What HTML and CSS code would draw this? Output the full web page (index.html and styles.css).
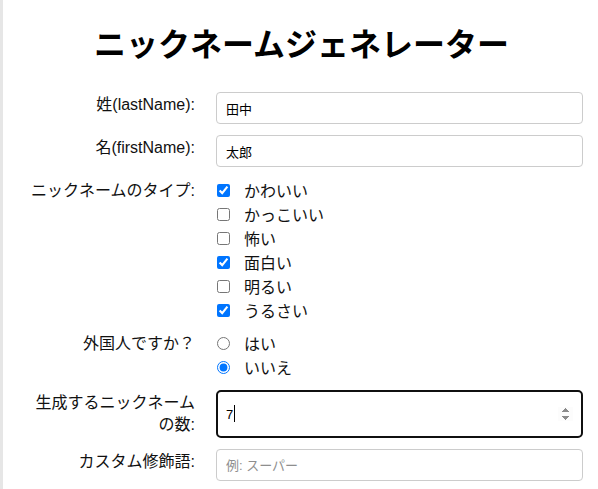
FILE: index.html
```html
<!DOCTYPE html>
<html lang="ja">
<head>
<meta charset="utf-8">
<title>ニックネームジェネレーター</title>
<link rel="stylesheet" href="styles.css">
</head>
<body>
<div class="page">
  <h1 class="title">ニックネームジェネレーター</h1>
  <form class="form">
    <label class="lbl" for="ln">姓(lastName):</label>
    <input class="field" id="ln" type="text" value="田中">

    <label class="lbl" for="fn">名(firstName):</label>
    <input class="field" id="fn" type="text" value="太郎">

    <div class="lbl">ニックネームのタイプ:</div>
    <div class="group group-check">
      <label class="opt"><input type="checkbox" checked><span>かわいい</span></label>
      <label class="opt"><input type="checkbox"><span>かっこいい</span></label>
      <label class="opt"><input type="checkbox"><span>怖い</span></label>
      <label class="opt"><input type="checkbox" checked><span>面白い</span></label>
      <label class="opt"><input type="checkbox"><span>明るい</span></label>
      <label class="opt"><input type="checkbox" checked><span>うるさい</span></label>
    </div>

    <div class="lbl">外国人ですか？</div>
    <div class="group">
      <label class="opt"><input type="radio" name="f"><span>はい</span></label>
      <label class="opt"><input type="radio" name="f" checked><span>いいえ</span></label>
    </div>

    <label class="lbl lbl-wrap" for="cnt">生成するニックネームの数:</label>
    <div class="num-wrap">
      <input class="field field-focus" id="cnt" type="number" value="7">
      <span class="caret"></span>
    </div>

    <label class="lbl" for="mod">カスタム修飾語:</label>
    <input class="field" id="mod" type="text" placeholder="例: スーパー">
  </form>
</div>
</body>
</html>
```

FILE: styles.css
```css
html, body {
  margin: 0;
  padding: 0;
}
body {
  background: #e6e6e6;
  font-family: "Liberation Sans", "Noto Sans CJK JP", sans-serif;
  color: #111;
}
.page {
  margin-left: 3px;
  background: #fff;
  min-height: 100vh;
  padding: 22px 15px 0 17px;
  box-sizing: border-box;
}
.title {
  margin: 0 0 24px 0;
  text-align: center;
  font-size: 32px;
  line-height: 46px;
  font-weight: 700;
  color: #000;
}
.form {
  display: grid;
  grid-template-columns: 175px 1fr;
  column-gap: 21px;
  row-gap: 11px;
}
.lbl {
  text-align: right;
  font-size: 16px;
  line-height: 22px;
  padding: 2px 0;
}
.field {
  box-sizing: border-box;
  width: 100%;
  height: 32px;
  border: 1px solid #ccc;
  border-radius: 4px;
  padding: 0 9px;
  font-family: "Liberation Sans", "Noto Sans CJK JP", sans-serif;
  font-size: 13px;
  color: #000;
  background: #fff;
  outline: none;
}
.field::placeholder {
  color: #8e8e8e;
}
.group {
  display: flex;
  flex-direction: column;
}
.group-check {
  margin-bottom: -2px;
}
.opt {
  display: flex;
  align-items: center;
  height: 24px;
  font-size: 16px;
}
.opt input {
  width: 13px;
  height: 13px;
  margin: 0 14px 0 1px;
}
.num-wrap {
  position: relative;
  display: flex;
}
.field-focus {
  height: 100%;
  border: 2px solid #101010;
  border-radius: 5px;
  padding: 0 8px;
}
.field-focus::-webkit-inner-spin-button {
  opacity: 1;
}
.caret {
  position: absolute;
  left: 18px;
  top: 15px;
  width: 1px;
  height: 17px;
  background: #000;
}
```
